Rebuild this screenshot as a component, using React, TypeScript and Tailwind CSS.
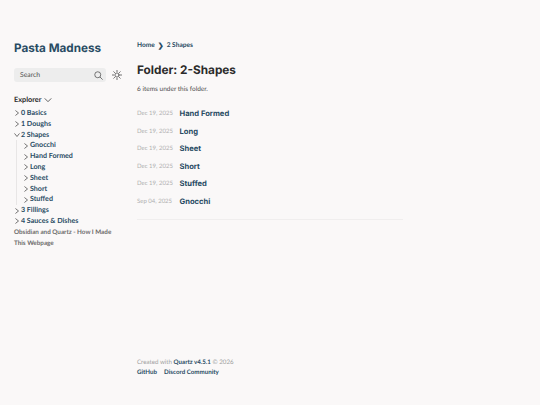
import React from "react";

const sans = "font-['Lato','Noto_Sans',sans-serif]";
const head = "font-['Inter','Liberation_Sans',sans-serif]";

function Chevron({ open = false }: { open?: boolean }) {
  return (
    <svg width="6" height="6" viewBox="0 0 24 24" fill="none" stroke="#2b2b2b" strokeWidth="2.6" strokeLinecap="round" strokeLinejoin="round" className="shrink-0">
      <polyline points={open ? "3 7 12 18 21 7" : "7 3 18 12 7 21"} />
    </svg>
  );
}

function Row({ label, open }: { label: string; open?: boolean }) {
  return (
    <div className="flex items-center h-[10.8px] gap-[1px]">
      <Chevron open={open} />
      <span className="text-[7.1px] font-bold text-[#284b63] leading-[10.8px] whitespace-nowrap">{label}</span>
    </div>
  );
}

const items = [
  ["Dec 19, 2025", "Hand Formed"],
  ["Dec 19, 2025", "Long"],
  ["Dec 19, 2025", "Sheet"],
  ["Dec 19, 2025", "Short"],
  ["Dec 19, 2025", "Stuffed"],
  ["Sep 04, 2025", "Gnocchi"],
];

export default function App() {
  return (
    <div className={`w-[540px] h-[405px] bg-[#faf8f8] flex overflow-hidden [text-rendering:geometricPrecision] ${sans}`}>
      <aside className="w-[137px] shrink-0 pl-[14px] pt-[40px] flex flex-col">
        <h1 className={`text-[11.7px] leading-[16px] font-bold text-[#284b63] ${head}`}>Pasta Madness</h1>
        <div className="flex items-center mt-[12px] gap-[6px]">
          <div className="w-[92px] h-[14px] rounded-[3px] bg-[#ededed] flex items-center justify-between pl-[6px] pr-[3px]">
            <span className="text-[6.8px] text-[#4e4e4e]">Search</span>
            <svg width="9" height="9" viewBox="0 0 24 24" fill="none" stroke="#4e4e4e" strokeWidth="2">
              <circle cx="10" cy="10" r="8" />
              <line x1="16" y1="16" x2="23" y2="23" />
            </svg>
          </div>
          <svg width="10" height="10" viewBox="0 0 24 24" fill="none" stroke="#2b2b2b" strokeWidth="1.6" strokeLinecap="round">
            <circle cx="12" cy="12" r="5" />
            <path d="M12 1v3M12 20v3M1 12h3M20 12h3M4.2 4.2l2.1 2.1M17.7 17.7l2.1 2.1M4.2 19.8l2.1-2.1M17.7 6.3l2.1-2.1" />
          </svg>
        </div>
        <div className="flex items-center gap-[3px] mt-[13px] h-[10px]">
          <span className="text-[7.3px] font-bold text-[#2b2b2b] leading-[10px]">Explorer</span>
          <svg width="8" height="8" viewBox="0 0 24 24" fill="none" stroke="#2b2b2b" strokeWidth="2.2" strokeLinecap="round" strokeLinejoin="round">
            <polyline points="3 8 12 17 21 8" />
          </svg>
        </div>
        <div className="mt-[3px] flex flex-col">
          <Row label="0 Basics" />
          <Row label="1 Doughs" />
          <Row label="2 Shapes" open />
          <div className="ml-[2px] pl-[6px] border-l border-[#e8e6e6] flex flex-col">
            <Row label="Gnocchi" />
            <Row label="Hand Formed" />
            <Row label="Long" />
            <Row label="Sheet" />
            <Row label="Short" />
            <Row label="Stuffed" />
          </div>
          <Row label="3 Fillings" />
          <Row label="4 Sauces & Dishes" />
          <p className="text-[6.3px] font-bold text-[#6a6a6a] leading-[11px] w-[104px]">Obsidian and Quartz - How I Made This Webpage</p>
        </div>
      </aside>
      <main className="flex-1 pt-[42px] flex flex-col">
        <div className="flex items-center text-[6.6px] font-bold text-[#284b63] h-[8px]">
          <span>Home</span>
          <span className="mx-[3px] text-[7px]">❯</span>
          <span>2 Shapes</span>
        </div>
        <h2 className={`text-[11.8px] leading-[16px] font-bold text-[#2b2b2b] mt-[12px] ${head}`}>Folder: 2-Shapes</h2>
        <p className="text-[6.5px] text-[#4e4e4e] mt-[7px] leading-[9px]">6 items under this folder.</p>
        <ul className="mt-[11px] w-[266px] flex flex-col border-b border-[#f0eeee] pb-[9px]">
          {items.map(([d, t]) => (
            <li key={t} className="flex items-center h-[17.5px]">
              <span className="w-[42.5px] text-[6px] text-[#b0b0b0] whitespace-nowrap">{d}</span>
              <span className={`text-[7.6px] font-bold text-[#284b63] ${head}`}>{t}</span>
            </li>
          ))}
        </ul>
        <div className="mt-[137.5px] text-[6.2px] leading-[10.5px] text-[#a0a0a0]">
          <p>Created with <span className="font-bold text-[#284b63]">Quartz v4.5.1</span> © 2026</p>
          <p className="font-bold text-[#284b63] flex gap-[7px]"><span>GitHub</span><span>Discord Community</span></p>
        </div>
      </main>
    </div>
  );
}
